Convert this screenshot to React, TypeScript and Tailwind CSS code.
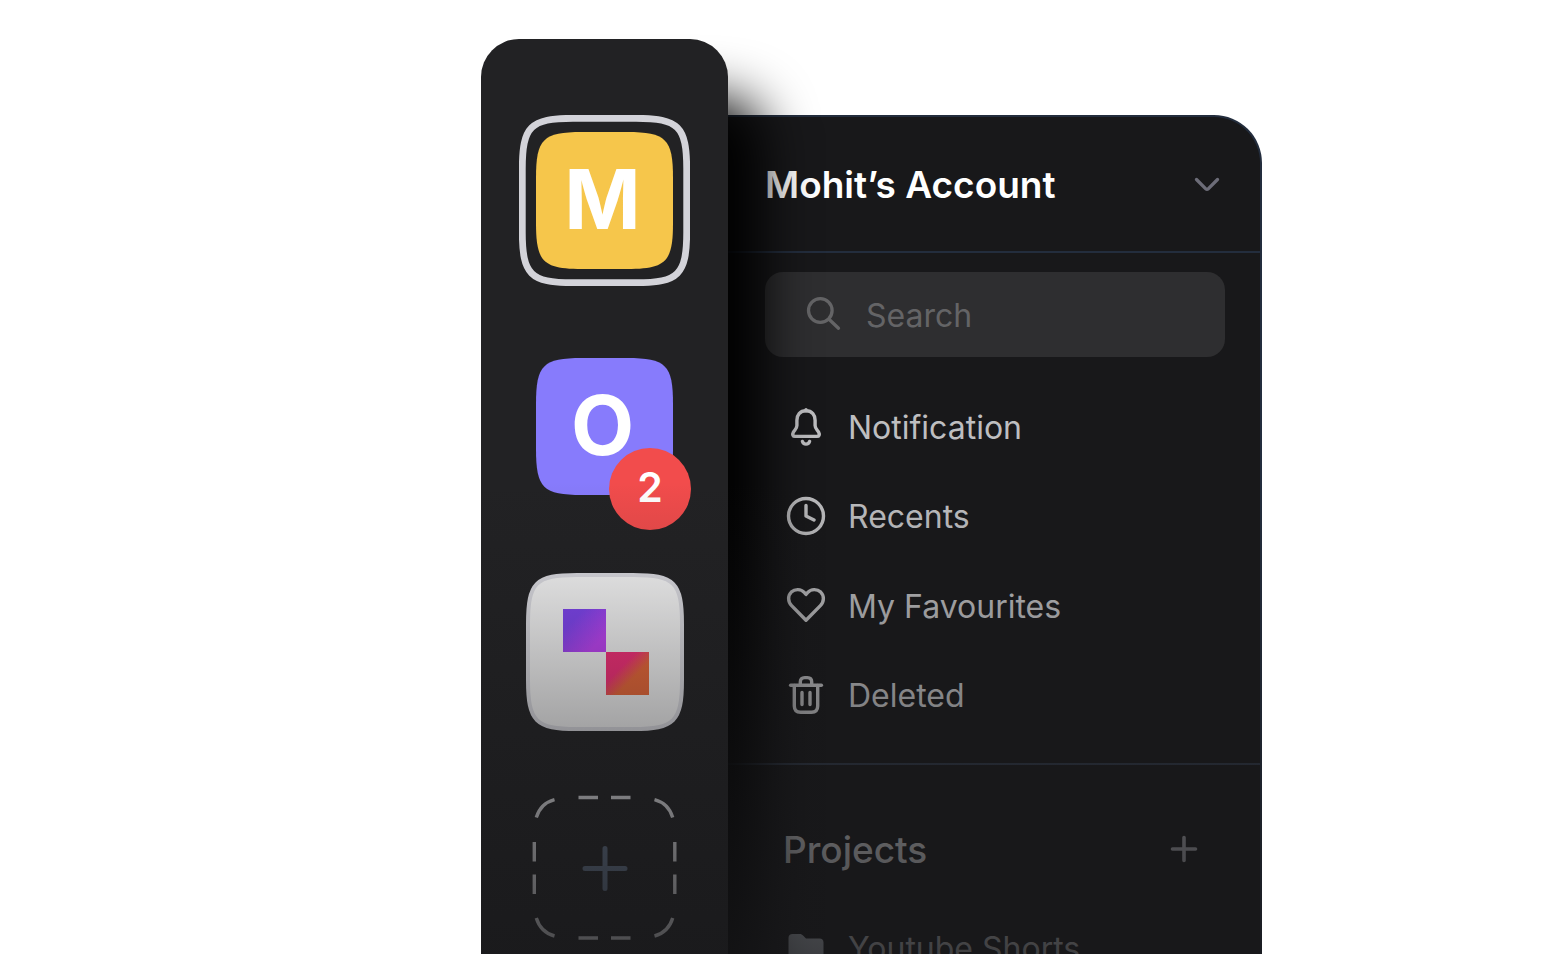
import type { ReactNode } from "react";

function Icon({ children }: { children: ReactNode }) {
  return (
    <svg
      viewBox="0 0 40 40"
      className="size-10 shrink-0"
      fill="none"
      stroke="currentColor"
      strokeWidth="3.4"
      strokeLinecap="round"
      strokeLinejoin="round"
      aria-hidden="true"
    >
      {children}
    </svg>
  );
}

const navItems: { label: string; icon: ReactNode }[] = [
  {
    label: "Notification",
    icon: (
      <>
        <path d="M20 3.8C13.8 3.8 10.9 8.4 10.9 13.2V18.5C10.9 21.5 8.6 23 7.3 25.4C6.1 27.6 6.9 29.4 9 29.4H31C33.1 29.4 33.9 27.6 32.7 25.4C31.4 23 29.1 21.5 29.1 18.5V13.2C29.1 8.4 26.2 3.8 20 3.8Z" />
        <path d="M20 2.7V3.8" />
        <path d="M16.4 34.4C16.9 36.2 18.2 37.1 20 37.1C21.8 37.1 23.1 36.2 23.6 34.4" />
      </>
    ),
  },
  {
    label: "Recents",
    icon: (
      <>
        <circle cx="20" cy="20" r="17.5" />
        <path d="M20 9.5V20L28 24" />
      </>
    ),
  },
  {
    label: "My Favourites",
    icon: (
      <path d="M20 34.2L5.6 19.6C1.7 15.6 1.7 9.7 5.3 6.1C9 2.6 15 2.8 18.2 6.4L20 8.4L21.8 6.4C25 2.8 31 2.6 34.7 6.1C38.3 9.7 38.3 15.6 34.4 19.6Z" />
    ),
  },
  {
    label: "Deleted",
    icon: (
      <>
        <path d="M4.6 10.2H35.4" />
        <path d="M14.3 9.6V7C14.3 4.2 15.9 2.6 18.6 2.6H21.4C24.1 2.6 25.7 4.2 25.7 7V9.6" />
        <path d="M8.3 10.5V31C8.3 35 10.6 37.2 14.6 37.2H25.4C29.4 37.2 31.7 35 31.7 31V10.5" />
        <path d="M16 17.5V29.5M24 17.5V29.5" />
      </>
    ),
  },
];

function Squircle({ className }: { className: string }) {
  return (
    <svg viewBox="0 0 137 137" className={className} aria-hidden="true">
      <path
        fill="currentColor"
        d="M0 46C0 7 7 0 46 0H91C130 0 137 7 137 46V91C137 130 130 137 91 137H46C7 137 0 130 0 91Z"
      />
    </svg>
  );
}

function Rail() {
  return (
    <aside
      aria-label="Workspaces"
      className="relative z-10 mt-[39px] w-[247px] shrink-0 rounded-t-[38px] bg-[#222224] pt-12 shadow-[33px_60px_54px_0_#000] [clip-path:inset(-90px_-140px_0_0)]"
    >
      <ul className="flex flex-col items-center">
        <li className="grid h-[226px] place-items-center">
          <button
            type="button"
            aria-current="true"
            className="relative grid size-[171px] place-items-center pr-1 text-[82px] font-bold leading-none text-white"
          >
            <svg viewBox="0 0 171 171" className="absolute inset-0" aria-hidden="true">
              <path
                fill="none"
                stroke="#d3d3d9"
                strokeWidth="6.8"
                d="M3.3 54C3.3 11.5 11.5 3.3 54 3.3H117C159.5 3.3 167.7 11.5 167.7 54V117C167.7 159.5 159.5 167.7 117 167.7H54C11.5 167.7 3.3 159.5 3.3 117Z"
              />
            </svg>
            <Squircle className="absolute inset-[17px] text-[#f6c64b]" />
            <span className="relative">M</span>
          </button>
        </li>
        <li className="grid h-[226px] place-items-center">
          <button
            type="button"
            className="relative grid size-[137px] place-items-center pr-1 text-[82px] font-bold leading-none text-white"
          >
            <Squircle className="absolute inset-0 text-[#877bfc]" />
            <span className="relative">O</span>
            <span className="absolute -bottom-[35px] -right-[18px] grid size-[82px] place-items-center rounded-full bg-[#f24c4c] pb-0.5 text-[41px] font-semibold">
              2
            </span>
          </button>
        </li>
        <li className="grid h-[226px] place-items-center">
          <button type="button" aria-label="Open workspace" className="size-[158px]">
            <svg viewBox="0 0 158 158" aria-hidden="true">
              <defs>
                <linearGradient id="violet" x1="0" y1="0" x2="1" y2="1">
                  <stop offset="0.25" stopColor="#8346f9" />
                  <stop offset="0.8" stopColor="#c644fe" />
                </linearGradient>
                <linearGradient id="ember" x1="0" y1="0" x2="1" y2="1">
                  <stop offset="0.35" stopColor="#ff2f7c" />
                  <stop offset="0.62" stopColor="#f46b38" />
                </linearGradient>
              </defs>
              <path
                fill="#fff"
                stroke="#e4e4ea"
                strokeWidth="4"
                d="M2 51C2 9.5 9.5 2 51 2H107C148.5 2 156 9.5 156 51V107C156 148.5 148.5 156 107 156H51C9.5 156 2 148.5 2 107Z"
              />
              <path fill="url(#violet)" d="M37 36H80V79H37Z" />
              <path fill="url(#ember)" d="M80 79H123V122H80Z" />
            </svg>
          </button>
        </li>
        <li className="grid h-[206px] place-items-center">
          <button type="button" aria-label="Add workspace" className="size-[148px]">
            <svg viewBox="0 0 148 148" fill="none" aria-hidden="true">
              <path
                stroke="#e4e4e7"
                strokeWidth="3.4"
                d="M47.5 3.5H67M80 3.5H99.5M47.5 144H67M80 144H99.5M3.3 48V67.5M3.3 80.5V100M143.8 48V67.5M143.8 80.5V100M5.3 23.5C8 14.5 14.5 8 23.5 5.6M123.5 5.6C132.5 8 139.1 14.5 141.7 23.5M5.3 124C8 133 14.5 139.5 23.5 142M123.5 142C132.5 139.5 139.1 133 141.7 124"
              />
              <path
                stroke="#64748b"
                strokeWidth="5"
                strokeLinecap="round"
                d="M74 54.5V94.5M54 74.5H94"
              />
            </svg>
          </button>
        </li>
      </ul>
    </aside>
  );
}

function Panel() {
  return (
    <section className="mt-[115px] min-w-0 flex-1 rounded-tr-[48px] border-r-2 border-t-2 border-[#232d3d] bg-[#18181a] text-[#bebec0]">
      <button
        type="button"
        className="flex h-[136px] w-full items-center justify-between border-b-2 border-[#232d3d] pl-[37px] pr-[39px] pt-0.5 text-[37px] font-semibold text-white"
      >
        <span>Mohit’s Account</span>
        <svg viewBox="0 0 28 28" className="size-7" fill="none" aria-hidden="true">
          <path
            d="M3.5 8.5L12.8 17.8Q14 19 15.2 17.8L24.5 8.5"
            stroke="#6c6c78"
            strokeWidth="3.3"
            strokeLinecap="round"
          />
        </svg>
      </button>

      <label className="ml-[37px] mr-[35px] mt-[19px] flex h-[85px] items-center rounded-[18px] bg-[#2e2e30] pl-[38px]">
        <svg
          viewBox="0 0 40 40"
          className="size-10"
          fill="none"
          stroke="#646466"
          strokeWidth="3.3"
          strokeLinecap="round"
          aria-hidden="true"
        >
          <circle cx="17.3" cy="15.5" r="11.8" />
          <path d="M26 24.2L35.5 33.2" />
        </svg>
        <input
          type="search"
          aria-label="Search"
          placeholder="Search"
          className="ml-[23px] min-w-0 flex-1 bg-transparent pt-0.5 text-[32px] outline-none placeholder:text-[#646466]"
        />
      </label>

      <nav className="mt-[25px] grid h-[358px] grid-rows-4 pl-[58px]">
        {navItems.map((item) => (
          <a key={item.label} href="#" className="flex items-center gap-[22px] text-[32px]">
            <Icon>{item.icon}</Icon>
            <span className="pt-0.5">{item.label}</span>
          </a>
        ))}
      </nav>

      <div className="mt-[23px] border-t-2 border-[#2d3543] pt-[42px]">
        <div className="flex h-[85px] items-center justify-between pl-[55px] pr-[61px]">
          <h2 className="text-[37px] font-medium">Projects</h2>
          <button type="button" aria-label="Add project">
            <svg viewBox="0 0 30 30" className="size-[30px]" fill="none" aria-hidden="true">
              <path
                d="M15 2.5V25.5M3.5 14H26.5"
                stroke="#98989e"
                strokeWidth="3.6"
                strokeLinecap="round"
              />
            </svg>
          </button>
        </div>
        <a href="#" className="mt-3 flex h-[90px] items-center gap-[22px] pl-[58px] text-[32px]">
          <svg viewBox="0 0 40 40" className="size-10 shrink-0 text-[#b4bac2]" aria-hidden="true">
            <path
              fill="currentColor"
              d="M2.5 9C2.5 6.5 4 5 6.5 5H13.5C15.2 5 16.2 5.6 17.3 6.8L20 9.5H33.5C36 9.5 37.5 11 37.5 13.5V32C37.5 34.5 36 36 33.5 36H6.5C4 36 2.5 34.5 2.5 32Z"
            />
          </svg>
          <span>Youtube Shorts</span>
        </a>
      </div>
    </section>
  );
}

export default function App() {
  return (
    <main className="h-screen overflow-hidden bg-white pl-[481px] font-['Inter',sans-serif]">
      <div className="relative flex h-full w-full max-w-[781px]">
        <Rail />
        <Panel />
        <div className="pointer-events-none absolute inset-x-0 bottom-0 top-[482px] z-20 bg-linear-to-b from-[#18181a]/0 to-[#18181a]/76" />
      </div>
    </main>
  );
}
